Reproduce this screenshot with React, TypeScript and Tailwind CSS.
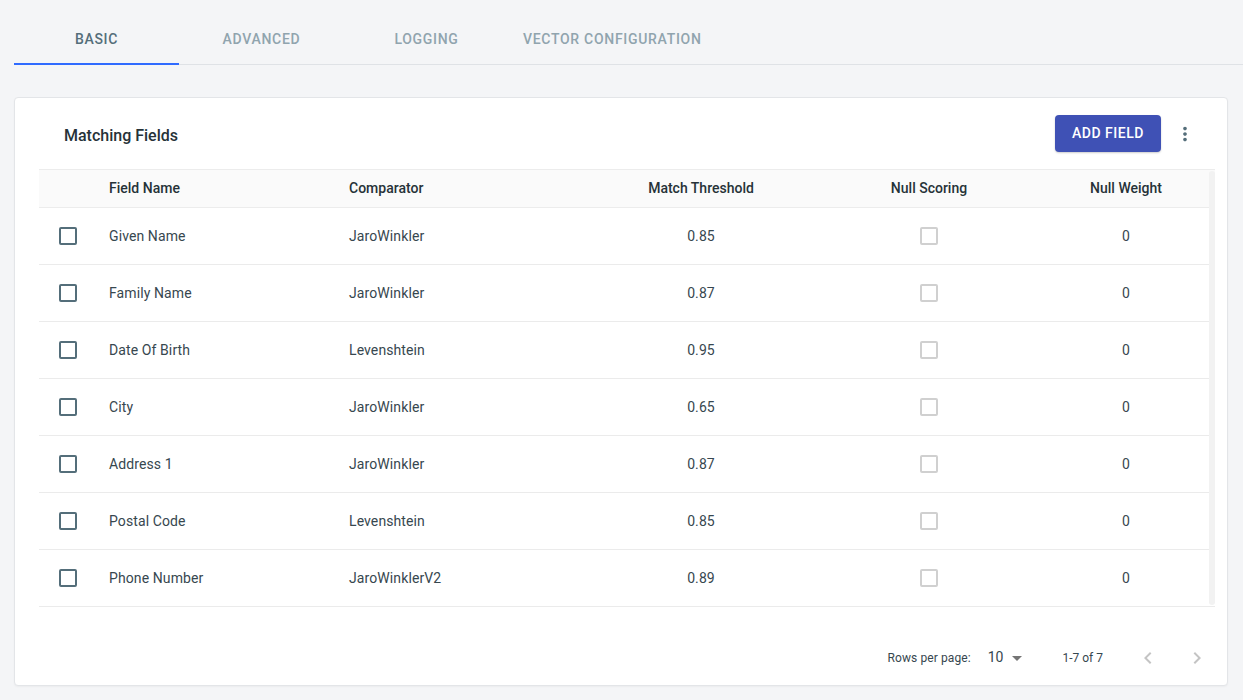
import { useState } from "react";

type Field = {
	name: string;
	comparator: string;
	threshold: string;
	nullWeight: string;
};

const fields: Field[] = [
	{ name: "Given Name", comparator: "JaroWinkler", threshold: "0.85", nullWeight: "0" },
	{ name: "Family Name", comparator: "JaroWinkler", threshold: "0.87", nullWeight: "0" },
	{ name: "Date Of Birth", comparator: "Levenshtein", threshold: "0.95", nullWeight: "0" },
	{ name: "City", comparator: "JaroWinkler", threshold: "0.65", nullWeight: "0" },
	{ name: "Address 1", comparator: "JaroWinkler", threshold: "0.87", nullWeight: "0" },
	{ name: "Postal Code", comparator: "Levenshtein", threshold: "0.85", nullWeight: "0" },
	{ name: "Phone Number", comparator: "JaroWinklerV2", threshold: "0.89", nullWeight: "0" },
];

const tabs = ["Basic", "Advanced", "Logging", "Vector Configuration"];

const cols = "grid grid-cols-[56px_240px_252px_228px_228px_166px]";

function Check({ light }: { light?: boolean }) {
	return (
		<span
			className={
				light
					? "block h-[18px] w-[18px] rounded-[2px] border-2 border-[#d0d0d0]"
					: "block h-[18px] w-[18px] rounded-[2px] border-2 border-[#546e7a]"
			}
		/>
	);
}

export default function App() {
	const [active, setActive] = useState(0);

	return (
		<div className="min-h-[700px] w-full bg-[#f4f5f7] pt-[16px] font-['Roboto',sans-serif] text-[#37474f]">
			{/* tabs */}
			<div className="ml-[14px] flex border-b border-[#dfe2e6]">
				{tabs.map((tab, i) => (
					<button
						key={tab}
						type="button"
						onClick={() => setActive(i)}
						className={
							i === active
								? "-mb-px h-[49px] min-w-[165px] border-b-2 border-[#2f6bff] px-[14px] text-[14px] font-medium uppercase tracking-[0.7px] text-[#546e7a]"
								: "-mb-px h-[49px] min-w-[165px] border-b-2 border-transparent px-[14px] text-[14px] font-medium uppercase tracking-[0.7px] text-[#90a4ae]"
						}
					>
						{tab}
					</button>
				))}
			</div>

			{/* card */}
			<div className="mt-[32px] ml-[14px] mr-[15px] h-[589px] rounded-[4px] border border-[#e3e5e8] bg-white shadow-[0_1px_2px_rgba(0,0,0,0.04)]">
				<div className="flex h-[71px] items-center pl-[49px] pr-[30px]">
					<h2 className="pt-[5px] text-[16px] font-medium text-[#263238]">Matching Fields</h2>
					<button
						type="button"
						className="ml-auto h-[37px] w-[106px] rounded-[4px] bg-[#3f51b5] text-[14px] font-medium uppercase tracking-[0.5px] text-white shadow-[0_1px_2px_rgba(0,0,0,0.2)]"
					>
						Add Field
					</button>
					<button type="button" className="ml-[12px] flex h-[24px] w-[24px] items-center justify-center text-[#546e7a]">
						<svg width="22" height="22" viewBox="0 0 24 24" fill="currentColor">
							<path d="M12 8c1.1 0 2-.9 2-2s-.9-2-2-2-2 .9-2 2 .9 2 2 2zm0 2c-1.1 0-2 .9-2 2s.9 2 2 2 2-.9 2-2-.9-2-2-2zm0 6c-1.1 0-2 .9-2 2s.9 2 2 2 2-.9 2-2-.9-2-2-2z" />
						</svg>
					</button>
				</div>

				{/* table */}
				<div className="relative ml-[24px] mr-[12px]">
					<div className={`${cols} h-[39px] items-center border-t border-b border-[#ececec] bg-[#fafafa] text-[14px] font-medium text-[#263238]`}>
						<div />
						<div className="pl-[14px]">Field Name</div>
						<div className="pl-[14px]">Comparator</div>
						<div className="text-center">Match Threshold</div>
						<div className="text-center">Null Scoring</div>
						<div className="text-center">Null Weight</div>
					</div>
					{fields.map((f) => (
						<div key={f.name} className={`${cols} h-[57px] items-center border-b border-[#ebebeb] text-[14px] tracking-[0.1px]`}>
							<div className="flex justify-center pl-px">
								<Check />
							</div>
							<div className="pl-[14px]">{f.name}</div>
							<div className="pl-[14px]">{f.comparator}</div>
							<div className="text-center">{f.threshold}</div>
							<div className="flex justify-center">
								<Check light />
							</div>
							<div className="text-center">{f.nullWeight}</div>
						</div>
					))}
					{/* scrollbar track */}
					<div className="absolute top-[2px] right-0 bottom-[2px] w-[6px] rounded-full bg-[#f2f2f2]" />
				</div>

				{/* pagination */}
				<div className="flex h-[79px] items-center justify-end pt-[22px] pr-[18px] text-[#37474f]">
					<span className="text-[12px] tracking-[0.1px]">Rows per page:</span>
					<span className="ml-[17px] text-[14px]">10</span>
					<svg className="ml-[2px] text-[#757575]" width="24" height="24" viewBox="0 0 24 24" fill="currentColor">
						<path d="M7 10l5 5 5-5z" />
					</svg>
					<span className="ml-[33px] text-[12px]">1-7 of 7</span>
					<svg className="ml-[33px] text-[#c4c4c4]" width="24" height="24" viewBox="0 0 24 24" fill="currentColor">
						<path d="M15.41 7.41L14 6l-6 6 6 6 1.41-1.41L10.83 12z" />
					</svg>
					<svg className="ml-[25px] text-[#c4c4c4]" width="24" height="24" viewBox="0 0 24 24" fill="currentColor">
						<path d="M10 6L8.59 7.41 13.17 12l-4.58 4.59L10 18l6-6z" />
					</svg>
				</div>
			</div>
		</div>
	);
}
